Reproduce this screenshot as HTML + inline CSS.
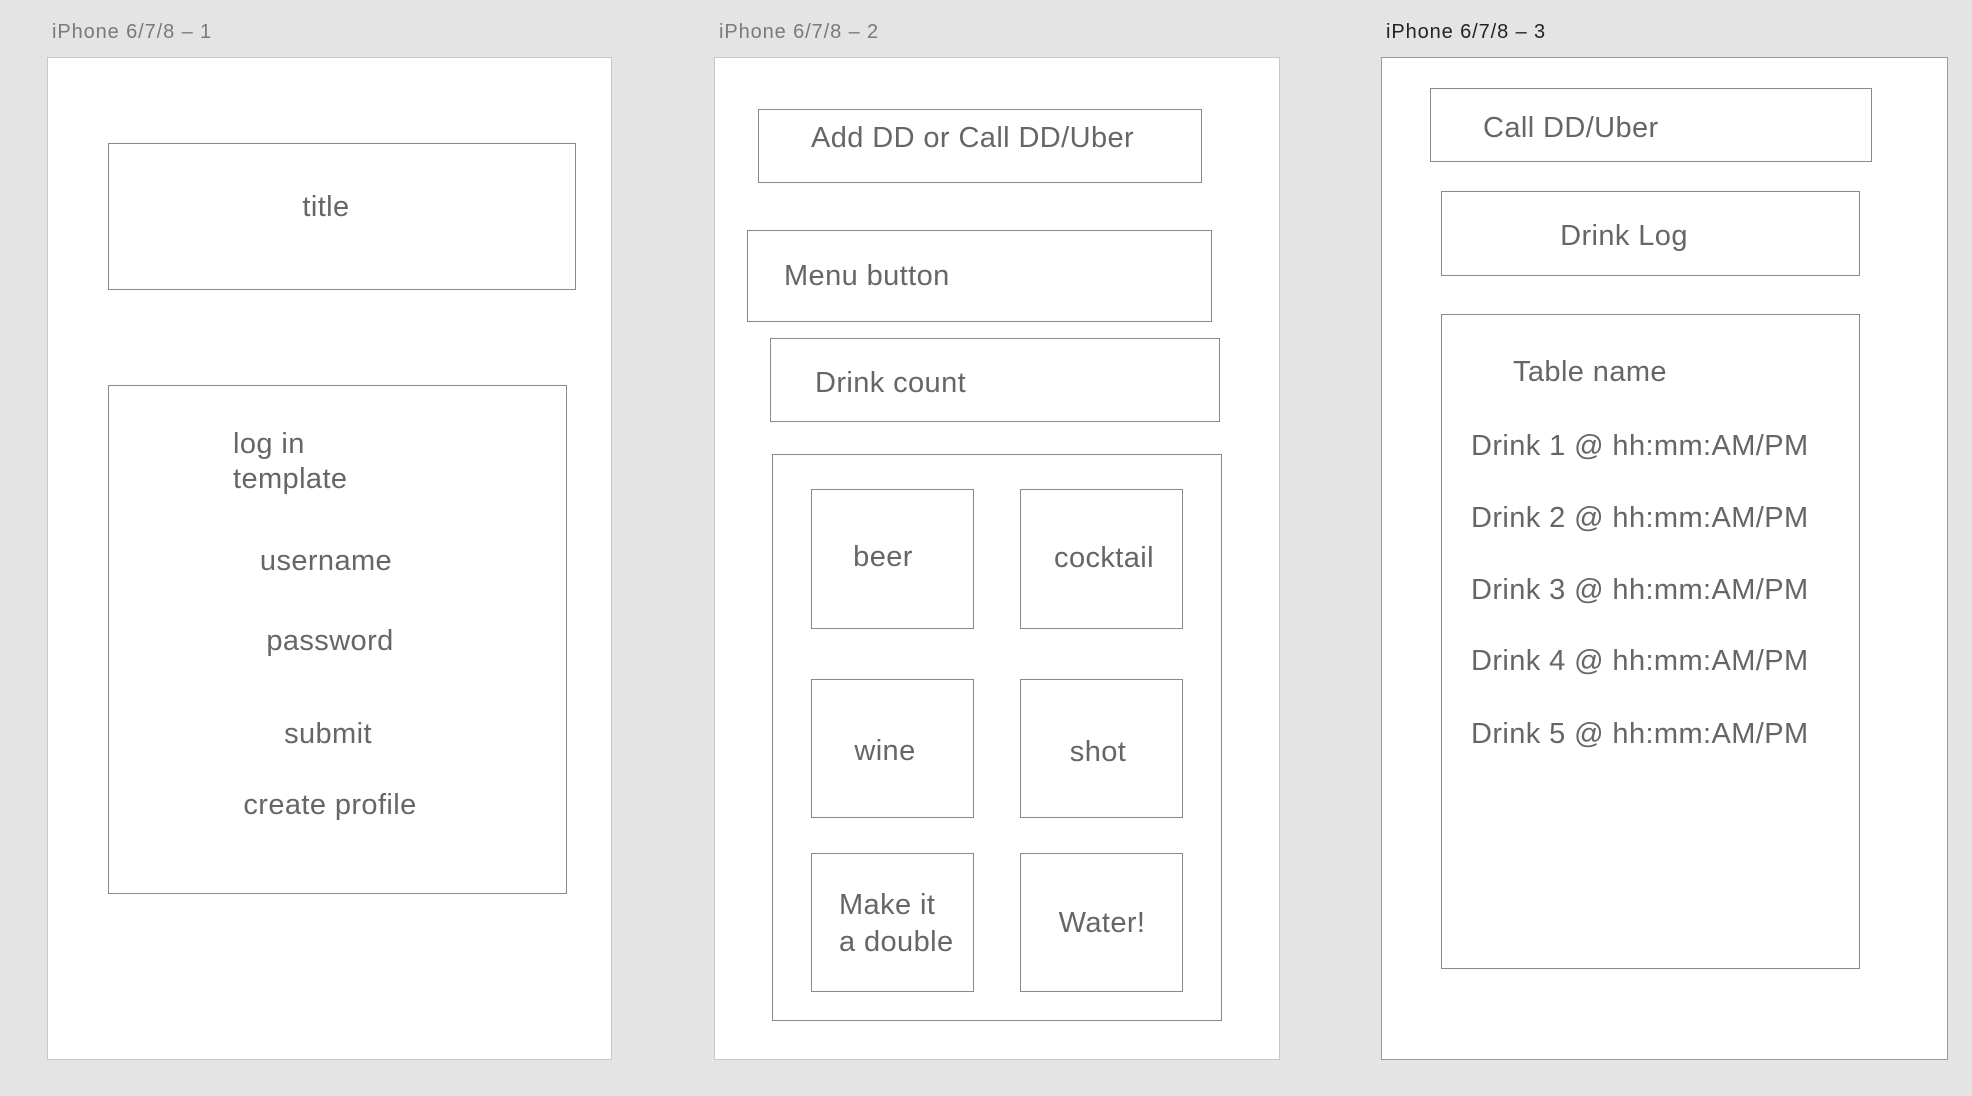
<!DOCTYPE html>
<html><head><meta charset="utf-8"><style>
body{margin:0;width:1972px;height:1096px;background:#e4e4e4;position:relative;overflow:hidden;font-family:"Liberation Sans",sans-serif;}
.ab{position:absolute;background:#fff;border:1px solid #c8c8c8;box-sizing:border-box;}
.lbl{position:absolute;font-size:20px;color:#7a7a7a;line-height:24px;letter-spacing:0.9px;}
.b{position:absolute;border:1.5px solid #8a8a8a;box-sizing:border-box;}
.t{position:absolute;font-size:29px;color:#666;line-height:40px;white-space:nowrap;letter-spacing:0.4px;}
.c{transform:translateX(-50%);}
</style></head><body>
<div class="lbl" style="left:52px;top:20px">iPhone 6/7/8 – 1</div>
<div class="lbl" style="left:719px;top:20px">iPhone 6/7/8 – 2</div>
<div class="lbl" style="left:1386px;top:20px;color:#222">iPhone 6/7/8 – 3</div>

<div class="ab" style="left:47px;top:57px;width:565px;height:1003px"></div>
<div class="ab" style="left:714px;top:57px;width:566px;height:1003px"></div>
<div class="ab" style="left:1381px;top:57px;width:567px;height:1003px;border-color:#999"></div>

<!-- artboard 1 -->
<div class="b" style="left:108px;top:143px;width:468px;height:147px"></div>
<div class="t c" style="left:326px;top:187px">title</div>
<div class="b" style="left:108px;top:385px;width:459px;height:509px"></div>
<div class="t" style="left:233px;top:424px">log in</div>
<div class="t" style="left:233px;top:459px">template</div>
<div class="t c" style="left:326px;top:541px">username</div>
<div class="t c" style="left:330px;top:621px">password</div>
<div class="t c" style="left:328px;top:714px">submit</div>
<div class="t c" style="left:330px;top:785px">create profile</div>

<!-- artboard 2 -->
<div class="b" style="left:758px;top:109px;width:444px;height:74px"></div>
<div class="t" style="left:811px;top:118px">Add DD or Call DD/Uber</div>
<div class="b" style="left:747px;top:230px;width:465px;height:92px"></div>
<div class="t" style="left:784px;top:256px">Menu button</div>
<div class="b" style="left:770px;top:338px;width:450px;height:84px"></div>
<div class="t" style="left:815px;top:363px">Drink count</div>
<div class="b" style="left:772px;top:454px;width:450px;height:567px"></div>
<div class="b" style="left:811px;top:489px;width:163px;height:140px"></div>
<div class="b" style="left:1020px;top:489px;width:163px;height:140px"></div>
<div class="b" style="left:811px;top:679px;width:163px;height:139px"></div>
<div class="b" style="left:1020px;top:679px;width:163px;height:139px"></div>
<div class="b" style="left:811px;top:853px;width:163px;height:139px"></div>
<div class="b" style="left:1020px;top:853px;width:163px;height:139px"></div>
<div class="t c" style="left:883px;top:537px">beer</div>
<div class="t c" style="left:1104px;top:538px">cocktail</div>
<div class="t c" style="left:885px;top:731px">wine</div>
<div class="t c" style="left:1098px;top:732px">shot</div>
<div class="t" style="left:839px;top:885px">Make it</div>
<div class="t" style="left:839px;top:922px">a double</div>
<div class="t c" style="left:1102px;top:903px">Water!</div>

<!-- artboard 3 -->
<div class="b" style="left:1430px;top:88px;width:442px;height:74px"></div>
<div class="t" style="left:1483px;top:108px">Call DD/Uber</div>
<div class="b" style="left:1441px;top:191px;width:419px;height:85px"></div>
<div class="t c" style="left:1624px;top:216px">Drink Log</div>
<div class="b" style="left:1441px;top:314px;width:419px;height:655px"></div>
<div class="t" style="left:1513px;top:352px">Table name</div>
<div class="t" style="left:1471px;top:426px">Drink 1 @ hh:mm:AM/PM</div>
<div class="t" style="left:1471px;top:498px">Drink 2 @ hh:mm:AM/PM</div>
<div class="t" style="left:1471px;top:570px">Drink 3 @ hh:mm:AM/PM</div>
<div class="t" style="left:1471px;top:641px">Drink 4 @ hh:mm:AM/PM</div>
<div class="t" style="left:1471px;top:714px">Drink 5 @ hh:mm:AM/PM</div>
</body></html>
